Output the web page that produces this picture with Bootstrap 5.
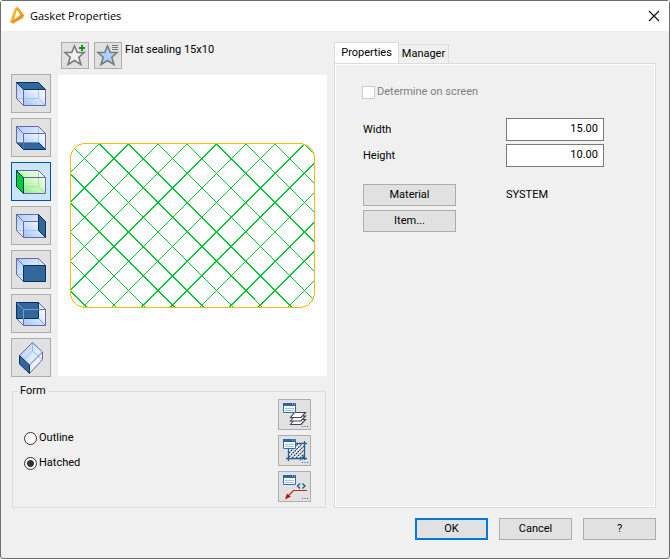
<!DOCTYPE html>
<html lang="en">
<head>
<meta charset="utf-8">
<meta name="viewport" content="width=device-width, initial-scale=1">
<title>Gasket Properties</title>
<link href="https://cdn.jsdelivr.net/npm/bootstrap@5.3.0/dist/css/bootstrap.min.css" rel="stylesheet">
<style>
body { font: 11px/16px Roboto, "Liberation Sans", sans-serif; color: #000; background: #fff; }
.dialog { background: #f0f0f0; border: 1px solid #6d6d6d; border-radius: 3px; }
.titlebar { height: 30px; padding-left: 9px; padding-right: 9px; }
.caption { font: 11px/16px "Open Sans", "Noto Sans", sans-serif; margin: 0; }
.win-btn { background: #e1e1e1; border: 1px solid #adadad; color: #000; padding: 0; line-height: 16px; text-align: center; }
.win-btn:hover { background: #e5f1fb; border-color: #0078d7; }
.win-btn svg, .plain-btn svg { display: block; }
.plain-btn { background: none; border: 0; padding: 0; }
.content { padding: 11px 13px 0 10px; gap: 7px; }
.side-left { flex: 316 1 0; min-width: 0; }
.side-right { flex: 322 1 0; min-width: 0; }
.toolbar { padding-left: 50px; gap: 5px; margin-bottom: 5px; height: 27px; }
.tool { width: 28px; height: 27px; }
.profile-name { margin: 0 0 12px -2px; }
.faces { width: 40px; gap: 5px; }
.face { width: 40px; height: 39px; }
.face.on { background: #cce4f7; border-color: #005499; }
.view { gap: 7px; }
.preview { background: #fff; margin: 1px 0; padding: 0 12px; min-width: 0; }
.preview svg { width: 100%; }
.form-group { border: 1px solid #dcdcdc; margin: 6px 1px 0 1px; padding: 0 14px 5px 11px; }
.form-group legend { font-size: 11px; line-height: 16px; width: auto; float: none; margin: -8px 0 0 -6px; padding: 0 2px; }
.shape-list { gap: 5px; }
.shape-btn { width: 33px; height: 31px; }
.radio-row { gap: 2px; height: 25px; }
.rad { appearance: none; width: 13px; height: 13px; border: 1px solid #333; border-radius: 50%; background: #fff; margin: 0; flex: none; }
.rad:checked { background: radial-gradient(circle, #333 3px, #fff 4px); }
.check-row { gap: 2px; margin-bottom: 18px; }
.tick { appearance: none; width: 13px; height: 13px; border: 1px solid #ccc; background: #fff; margin: 0; flex: none; }
.tick:disabled + label { color: #808080; }
.tabs { height: 21px; }
.tab { background: #f0f0f0; border: 1px solid #dcdcdc; border-bottom: 0; padding: 0; color: #000; line-height: 16px; }
.tab.on { background: #fff; width: 65px; height: 21px; }
.tab.off { width: 50px; height: 19px; border-left: 0; }
.panel { border: 1px solid #dcdcdc; box-shadow: inset 0 0 0 1px #fff; padding: 20px 27px; }
.fields { display: grid; grid-template-columns: 93px 98px; gap: 3px 50px; align-items: center; padding-left: 1px; }
.entry { height: 23px; width: 98px; border: 1px solid #7a7a7a; background: #fff; text-align: right; padding: 0 5px 3px; border-radius: 0; }
.acts { margin-top: 17px; row-gap: 4px; }
.act { height: 22px; }
.footer-row { padding: 10px 13px 18px; gap: 11px; }
.cmd { width: 73px; height: 22px; }
.cmd.main { border: 2px solid #0078d7; }
</style>
<script src="https://cdn.jsdelivr.net/npm/bootstrap@5.3.0/dist/js/bootstrap.bundle.min.js"></script>
</head>
<body>
<svg width="0" height="0" class="position-absolute" aria-hidden="true">
  <defs>
    <linearGradient id="gBack" x1="0" y1="0" x2="1" y2="1"><stop offset="0" stop-color="#a9c8f5"/><stop offset=".5" stop-color="#dce9fb"/><stop offset="1" stop-color="#fff"/></linearGradient>
    <linearGradient id="gFront" x1="0" y1="1" x2="1" y2="0"><stop offset="0" stop-color="#a0c4f4"/><stop offset=".5" stop-color="#d2e3fb"/><stop offset="1" stop-color="#fff"/></linearGradient>
    <linearGradient id="gGreen" x1="0" y1="1" x2="1" y2="0"><stop offset="0" stop-color="#7df07d"/><stop offset=".5" stop-color="#c6f8bc"/><stop offset="1" stop-color="#fff"/></linearGradient>
    <g id="cubeFill"><path d="M4.500 7.500H26.500L33.500 14.500V30.500H11.500L4.500 23.500Z" fill="url(#gBack)"/><path d="M11.500 14.500H33.500V30.500H11.500Z" fill="url(#gFront)"/></g>
    <g id="cubeHidden" fill="none" stroke="#a3c9e4"><path d="M4.500 23.500H26.500V7.500M26.500 23.500L33.500 30.500"/></g>
    <g id="cubeEdges" fill="none" stroke="#6b66a6"><path d="M4.500 7.500H26.500L33.500 14.500V30.500H11.500L4.500 23.500ZM4.500 7.500L11.500 14.500V30.500M11.500 14.500H33.500"/></g>
    <g id="miniWin"><path d="M4.500 3.500H16.500V12.500H4.500Z" fill="#fff" stroke="#336fa8"/><path d="M4 3H17V6H4Z" fill="#2b68a2"/><path d="M13 4h1M15 4h1M6 8.500H15M6 10.500H15" stroke="#9cc3ea"/></g>
    <path id="dots" d="M23 26h1v1h-1zM25.500 26h1v1h-1zM28 26h1v1h-1z" fill="#2c64a0"/>
    <path id="star" d="M12.500 3L15.300 9.500H22L16.800 14.200L19 21.500L12.500 17.500L6 21.500L8.200 14.200L3 9.500H9.700Z" stroke="#7b7b7b" stroke-width="1.600"/>
  </defs>
</svg>

<main class="dialog min-vh-100 d-flex flex-column">
  <header class="titlebar bg-white d-flex align-items-center justify-content-between">
    <div class="d-flex align-items-center">
      <svg width="20" height="20" viewBox="0 0 20 20" aria-hidden="true"><path d="M5 2L8 1L3.500 18L0 16Z" fill="#f9b233"/><path d="M6 2L8 1L14 9L11.500 11Z" fill="#f3a01c"/><path d="M10 9L14 9L13 12L3 17.500L1 16Z" fill="#e89a20"/><path d="M6.500 5L9.500 9.500L4.500 13Z" fill="#fff"/></svg>
      <h1 class="caption">Gasket Properties</h1>
    </div>
    <button type="button" class="plain-btn" aria-label="Close"><svg width="12" height="12" viewBox="0 0 12 12"><path d="M1 1L11 11M11 1L1 11" stroke="#111" stroke-width="1.200"/></svg></button>
  </header>

  <div class="content d-flex flex-grow-1">
    <section class="side-left d-flex flex-column">
      <div class="toolbar d-flex align-items-center">
        <button type="button" class="win-btn tool" aria-label="Add to favourites"><svg width="26" height="25" viewBox="0 0 26 25"><use href="#star" fill="#f0f0f0"/><path d="M17 4h2V2h2v2h2v2h-2v2h-2V6h-2z" fill="#0a9c0a" stroke="#e1e1e1" stroke-width="1" paint-order="stroke"/></svg></button>
        <button type="button" class="win-btn tool" aria-label="Favourites"><svg width="26" height="25" viewBox="0 0 26 25"><use href="#star" fill="#a9d4ff"/><path d="M17 2.500h6M17 4.500h6M17 6.500h6" stroke="#777"/></svg></button>
        <p class="profile-name">Flat sealing 15x10</p>
      </div>
      <div class="view d-flex">
        <div class="faces d-flex flex-column">
          <button type="button" class="win-btn face" aria-label="Top"><svg width="38" height="37" viewBox="0 0 38 37"><use href="#cubeFill"/><use href="#cubeHidden"/><use href="#cubeEdges"/><path d="M4.500 7.500H26.500L33.500 14.500H11.500Z" fill="#336699" stroke="#003366"/></svg></button>
          <button type="button" class="win-btn face" aria-label="Bottom"><svg width="38" height="37" viewBox="0 0 38 37"><use href="#cubeFill"/><use href="#cubeHidden"/><path d="M4.500 23.500H26.500L33.500 30.500H11.500Z" fill="#336699"/><use href="#cubeEdges"/><path d="M4.500 23.500L11.500 30.500H33.500L26.500 23.500" fill="none" stroke="#003366"/></svg></button>
          <button type="button" class="win-btn face on" aria-label="Left" aria-pressed="true"><svg width="38" height="37" viewBox="0 0 38 37"><path d="M4.500 7.500H26.500L33.500 14.500V30.500H11.500L4.500 23.500Z" fill="url(#gGreen)"/><path d="M11.500 14.500H33.500V30.500H11.500Z" fill="url(#gGreen)" opacity=".7"/><path d="M11 23.500H26.500V7.500M26.500 23.500L33.500 30.500" fill="none" stroke="#9be89b"/><use href="#cubeEdges"/><path d="M4.500 7.500L11.500 14.500V30.500L4.500 23.500Z" fill="#00cc33" stroke="#003366"/></svg></button>
          <button type="button" class="win-btn face" aria-label="Right"><svg width="38" height="37" viewBox="0 0 38 37"><use href="#cubeFill"/><use href="#cubeHidden"/><use href="#cubeEdges"/><path d="M26.500 7.500L33.500 14.500V30.500L26.500 23.500Z" fill="#336699" stroke="#003366"/></svg></button>
          <button type="button" class="win-btn face" aria-label="Front"><svg width="38" height="37" viewBox="0 0 38 37"><use href="#cubeFill"/><use href="#cubeHidden"/><use href="#cubeEdges"/><path d="M11.500 14.500H33.500V30.500H11.500Z" fill="#336699" stroke="#003366"/></svg></button>
          <button type="button" class="win-btn face" aria-label="Back"><svg width="38" height="37" viewBox="0 0 38 37"><use href="#cubeFill"/><use href="#cubeEdges"/><path d="M4.500 7.500H26.500V23.500H4.500Z" fill="#336699" stroke="#003366"/><path d="M5 8L11.500 14.500V30.500M11.500 14.500H27M26.500 23.500L33.500 30.500" fill="none" stroke="#6ca0d8"/><path d="M27 14.500H33.500V30.500H11.500V24" fill="none" stroke="#6b66a6"/></svg></button>
          <button type="button" class="win-btn face" aria-label="End"><svg width="38" height="37" viewBox="0 0 38 37"><path d="M20.500 3.500L30.500 13V20.500L17.500 34.500L7.500 25V16.500Z" fill="url(#gBack)"/><path d="M20.500 4V12L7.500 25M20.500 12L30.500 21" fill="none" stroke="#8fc0e4"/><path d="M20.500 3.500L30.500 13V20.500L17.500 34.500M7.500 16.500L20.500 3.500M17.500 26L30.500 13" fill="none" stroke="#6b66a6"/><path d="M7.500 16.500L17.500 26V34.500L7.500 25Z" fill="#336699" stroke="#003366"/></svg></button>
        </div>
        <div class="preview flex-grow-1 d-flex align-items-center">
          <svg viewBox="0 0 245 165" role="img" aria-label="Hatched gasket section" shape-rendering="crispEdges">
            <defs><clipPath id="gasketClip"><rect x="1" y="1" width="243" height="163" rx="15"/></clipPath></defs>
            <g clip-path="url(#gasketClip)" stroke="#00c832" fill="none">
              <path d="M-146.500 1l164 164m-134.700-164l164 164m-134.700-164l164 164m-134.700-164l164 164m-134.700-164l164 164m-134.700-164l164 164m-134.700-164l164 164m-134.700-164l164 164m-134.700-164l164 164m-134.700-164l164 164m-134.700-164l164 164m-134.700-164l164 164m-134.700-164l164 164m-134.700-164l164 164"/>
              <path d="M29.300 1l-164 164m193.300-164l-164 164m193.300-164l-164 164m193.300-164l-164 164m193.300-164l-164 164m193.300-164l-164 164m193.300-164l-164 164m193.300-164l-164 164m193.300-164l-164 164m193.300-164l-164 164m193.300-164l-164 164m193.300-164l-164 164m193.300-164l-164 164"/>
            </g>
            <rect x=".5" y=".5" width="244" height="164" rx="15" fill="none" stroke="#ffb900"/>
          </svg>
        </div>
      </div>
      <fieldset class="form-group mt-auto">
        <legend>Form</legend>
        <div class="d-flex justify-content-between align-items-center">
          <div>
            <div class="radio-row d-flex align-items-center"><input class="rad" type="radio" name="form" id="fOutline"><label for="fOutline">Outline</label></div>
            <div class="radio-row d-flex align-items-center"><input class="rad" type="radio" name="form" id="fHatched" checked><label for="fHatched">Hatched</label></div>
          </div>
          <div class="shape-list d-grid">
            <button type="button" class="win-btn shape-btn" aria-label="Layers"><svg width="31" height="29" viewBox="0 0 31 29"><g fill="#fff" stroke="#44484f" stroke-width="1.200"><path d="M11.500 24.500L15.500 19.500H26.500L22 24.500Z"/><path d="M11.500 21L15.500 16H26.500L22 21Z"/><path d="M11.500 17.500L15.500 12.500H26.500L22 17.500Z"/></g><use href="#miniWin"/><use href="#dots"/></svg></button>
            <button type="button" class="win-btn shape-btn" aria-label="Hatching"><svg width="31" height="29" viewBox="0 0 31 29"><path d="M10 8H25V22H10Z" fill="#fff"/><path d="M10 17L19 8M10 21L23 8M13 22L25 10M17 22L25 14M21 22L25 18" stroke="#243f63" stroke-width="1.300" stroke-dasharray="2 .6"/><path d="M9.500 13V25M25.500 5V24M17 7.500H28M7 22.500H28" stroke="#2b5d8c" stroke-width="1.300"/><path d="M20 25L25 19V22Z" fill="#2b5d8c"/><use href="#miniWin"/><use href="#dots"/></svg></button>
            <button type="button" class="win-btn shape-btn" aria-label="Leader text"><svg width="31" height="29" viewBox="0 0 31 29"><use href="#miniWin"/><path d="M21 11.500L18.500 14L21 16.500M23.500 11.500L26 14L23.500 16.500" fill="none" stroke="#205a80" stroke-width="1.300"/><path d="M28 18.500H14.500L8 25" fill="none" stroke="#c81e1e" stroke-width="1.200"/><path d="M6 27.500L8 21.500L9.500 23L12 24.500Z" fill="#b81414"/><use href="#dots"/></svg></button>
          </div>
        </div>
      </fieldset>
    </section>

    <section class="side-right d-flex flex-column">
      <div class="tabs d-flex align-items-end" role="tablist">
        <button type="button" class="tab on" role="tab" aria-selected="true">Properties</button>
        <button type="button" class="tab off" role="tab" aria-selected="false">Manager</button>
      </div>
      <div class="panel flex-grow-1">
        <div class="check-row d-flex align-items-center"><input class="tick" type="checkbox" id="det" disabled><label for="det">Determine on screen</label></div>
        <div class="fields">
          <label for="fw">Width</label><input class="entry" id="fw" type="text" value="15.00">
          <label for="fh">Height</label><input class="entry" id="fh" type="text" value="10.00">
        </div>
        <div class="fields acts">
          <button type="button" class="win-btn act">Material</button><span>SYSTEM</span>
          <button type="button" class="win-btn act">Item...</button>
        </div>
      </div>
    </section>
  </div>

  <footer class="footer-row d-flex justify-content-end">
    <button type="button" class="win-btn cmd main">OK</button>
    <button type="button" class="win-btn cmd">Cancel</button>
    <button type="button" class="win-btn cmd">?</button>
  </footer>
</main>
</body>
</html>
